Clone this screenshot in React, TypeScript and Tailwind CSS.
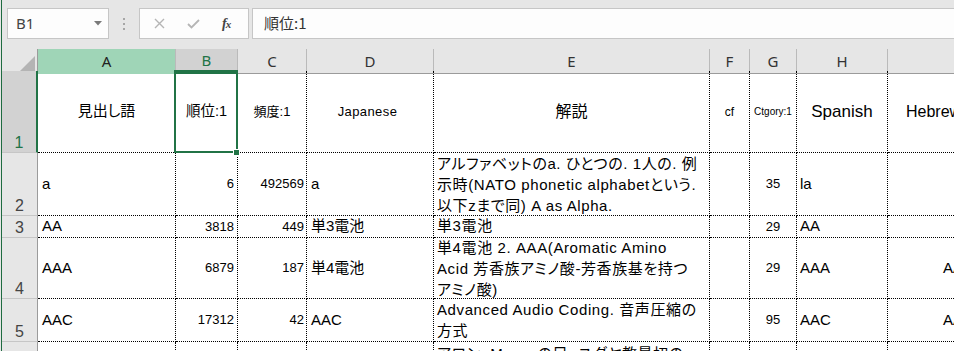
import React from "react";

const F = "font-['Liberation_Sans','Noto_Sans_CJK_JP',sans-serif] [font-feature-settings:'palt']";
const COLS = "grid grid-cols-[36px_138px_62px_69px_127px_276px_40px_47px_91px_220px]";

const cellBase =
  "border-r border-b border-dotted border-black flex items-center overflow-hidden whitespace-nowrap text-black";

type C = { t?: React.ReactNode; c?: string };

function RowHead({ n, active }: { n: number; active?: boolean }) {
  return (
    <div
      className={
        "flex items-end justify-center pb-[1px] text-[16px] leading-none border-b border-b-[#c6c6c6] " +
        (active
          ? "bg-[#d2d2d2] text-[#217346] border-r-2 border-r-[#217346]"
          : "bg-[#e6e6e6] text-[#444] border-r border-r-[#9b9b9b]")
      }
    >
      {n}
    </div>
  );
}

function Row({ n, h, cells, active }: { n: number; h: string; cells: C[]; active?: boolean }) {
  return (
    <div className={COLS + " " + h}>
      <RowHead n={n} active={active} />
      {cells.map((cell, i) => (
        <div key={i} className={cellBase + " " + (cell.c ?? "")}>
          {cell.t}
        </div>
      ))}
    </div>
  );
}

function Lines({ l }: { l: string[] }) {
  return (
    <div className="flex flex-col leading-[21px] text-[15px] tracking-[0.6px]">
      {l.map((s, i) => (
        <span key={i} className="whitespace-pre">
          {s}
        </span>
      ))}
    </div>
  );
}

export default function App() {
  const hdr = "flex items-center justify-center text-[15px] border-r border-r-[#bababa] border-b border-b-[#9b9b9b]";
  return (
    <div className={"w-[954px] h-[351px] overflow-hidden bg-white flex " + F}>
      <div className="w-[2px] shrink-0 flex">
        <div className="w-px bg-[#e6e6e6]" />
        <div className="w-px bg-[#1e6b40]" />
      </div>
      <div className="flex-1 min-w-0 flex flex-col">
        {/* formula bar */}
        <div className="h-[49px] shrink-0 bg-[#e6e6e6] flex items-start pt-[8px] pl-[5px]">
          <div className="w-[102px] h-[31px] bg-[#fdfdfd] border border-[#c6c6c6] flex items-center pl-[8px] pr-[6px]">
            <span className="text-[15px] text-[#444] font-['Noto_Sans',sans-serif]">B1</span>
            <svg className="ml-auto" width="8" height="5" viewBox="0 0 8 5">
              <path d="M0 0 L8 0 L4 4.5 Z" fill="#7a7a7a" />
            </svg>
          </div>
          <div className="w-[30px] h-[31px] flex flex-col items-center justify-center gap-[3px]">
            <div className="w-[2px] h-[2px] bg-[#a6a6a6]" />
            <div className="w-[2px] h-[2px] bg-[#a6a6a6]" />
            <div className="w-[2px] h-[2px] bg-[#a6a6a6]" />
          </div>
          <div className="w-[110px] h-[31px] bg-[#fdfdfd] border border-[#c6c6c6] flex items-center">
            <svg className="ml-[14px]" width="11" height="11" viewBox="0 0 11 11">
              <path d="M1 1 L10 10 M10 1 L1 10" stroke="#b5b5b5" strokeWidth="1.4" fill="none" />
            </svg>
            <svg className="ml-[22px]" width="13" height="10" viewBox="0 0 13 10">
              <path d="M1 5 L4.5 8.5 L12 1" stroke="#b5b5b5" strokeWidth="1.8" fill="none" />
            </svg>
            <span className="ml-[22px] text-[14px] italic font-bold text-[#444] font-['Liberation_Serif',serif] tracking-[-1px]">
              f<span className="text-[11px]">x</span>
            </span>
          </div>
          <div className="flex-1 ml-[3px] h-[31px] bg-[#fdfdfd] border border-r-0 border-[#c6c6c6] flex items-center pl-[11px]">
            <span className="text-[15px] text-[#333] font-['Noto_Sans_CJK_JP',sans-serif]">順位:1</span>
          </div>
        </div>

        {/* column header */}
        <div className={COLS + " h-[22px] shrink-0 font-['Noto_Sans',sans-serif]"}>
          <div className="bg-[#e6e6e6] border-r border-r-[#9b9b9b] border-b border-b-[#9b9b9b] flex items-end justify-end pr-[2px] pb-[2px]">
            <svg width="15" height="15" viewBox="0 0 15 15">
              <path d="M15 0 L15 15 L0 15 Z" fill="#b4b4b4" />
            </svg>
          </div>
          <div className={hdr + " bg-[#9fd5b7] text-[#222] border-b-[#9fd5b7]"}>A</div>
          <div className="flex items-center justify-center text-[15px] bg-[#d2d2d2] text-[#217346] border-r border-r-[#bababa] border-b-2 border-b-[#217346]">B</div>
          <div className={hdr + " bg-[#e6e6e6] text-[#333]"}>C</div>
          <div className={hdr + " bg-[#e6e6e6] text-[#333]"}>D</div>
          <div className={hdr + " bg-[#e6e6e6] text-[#333]"}>E</div>
          <div className={hdr + " bg-[#e6e6e6] text-[#333]"}>F</div>
          <div className={hdr + " bg-[#e6e6e6] text-[#333]"}>G</div>
          <div className={hdr + " bg-[#e6e6e6] text-[#333]"}>H</div>
          <div className={hdr + " bg-[#e6e6e6] text-[#333]"}>I</div>
        </div>

        <Row
          n={1}
          h="h-[82px] shrink-0"
          active
          cells={[
            { t: "見出し語", c: "justify-center text-[15px]" },
            {
              t: (
                <>
                  順位:1
                  <div className="absolute left-[-2px] top-[-1px] w-[64px] h-[83px] border-2 border-[#217346]" />
                  <div className="absolute left-[57px] top-[78px] w-[7px] h-[7px] bg-[#217346] border border-white" />
                </>
              ),
              c: "justify-center text-[14.5px] relative overflow-visible z-10",
            },
            { t: "頻度:1", c: "justify-center text-[13px]" },
            { t: "Japanese", c: "justify-center text-[13px] tracking-[0.4px] pr-[5px]" },
            { t: "解説", c: "justify-center text-[16px]" },
            { t: "cf", c: "justify-center text-[12px]" },
            { t: "Ctgory:1", c: "justify-center text-[10px]" },
            { t: "Spanish", c: "justify-center text-[17px]" },
            { t: "Hebrew", c: "pl-[18px] text-[16px]" },
          ]}
        />
        <Row
          n={2}
          h="h-[63px] shrink-0"
          cells={[
            { t: "a", c: "pl-[4px] text-[15px]" },
            { t: "6", c: "justify-end pr-[3px] text-[13px]" },
            { t: "492569", c: "justify-end pr-[2px] text-[13px]" },
            { t: "a", c: "pl-[4px] text-[15px]" },
            {
              t: <Lines l={["アルファベットのa. ひとつの. 1人の. 例", "示時(NATO phonetic alphabetという.", "以下zまで同) A as Alpha."]} />,
              c: "pl-[3px]",
            },
            { t: "" },
            { t: "35", c: "justify-center text-[13px]" },
            { t: "la", c: "pl-[3px] text-[15px]" },
            { t: "" },
          ]}
        />
        <Row
          n={3}
          h="h-[22px] shrink-0"
          cells={[
            { t: "AA", c: "pl-[4px] text-[15px]" },
            { t: "3818", c: "justify-end pr-[3px] text-[13px]" },
            { t: "449", c: "justify-end pr-[2px] text-[13px]" },
            { t: "単3電池", c: "pl-[4px] text-[15px]" },
            { t: "単3電池", c: "pl-[3px] text-[15px] tracking-[0.6px]" },
            { t: "" },
            { t: "29", c: "justify-center text-[13px]" },
            { t: "AA", c: "pl-[3px] text-[15px]" },
            { t: "" },
          ]}
        />
        <Row
          n={4}
          h="h-[61px] shrink-0"
          cells={[
            { t: "AAA", c: "pl-[4px] text-[15px]" },
            { t: "6879", c: "justify-end pr-[3px] text-[13px]" },
            { t: "187", c: "justify-end pr-[2px] text-[13px]" },
            { t: "単4電池", c: "pl-[4px] text-[15px]" },
            {
              t: <Lines l={["単4電池 2. AAA(Aromatic Amino", "Acid 芳香族アミノ酸-芳香族基を持つ", "アミノ酸)"]} />,
              c: "pl-[3px]",
            },
            { t: "" },
            { t: "29", c: "justify-center text-[13px]" },
            { t: "AAA", c: "pl-[3px] text-[15px]" },
            { t: "AAA", c: "pl-[55px] text-[15px]" },
          ]}
        />
        <Row
          n={5}
          h="h-[43px] shrink-0"
          cells={[
            { t: "AAC", c: "pl-[4px] text-[15px]" },
            { t: "17312", c: "justify-end pr-[3px] text-[13px]" },
            { t: "42", c: "justify-end pr-[2px] text-[13px]" },
            { t: "AAC", c: "pl-[4px] text-[15px]" },
            {
              t: <Lines l={["Advanced Audio Coding. 音声圧縮の", "方式"]} />,
              c: "pl-[3px]",
            },
            { t: "" },
            { t: "95", c: "justify-center text-[13px]" },
            { t: "AAC", c: "pl-[3px] text-[15px]" },
            { t: "AAC", c: "pl-[55px] text-[15px]" },
          ]}
        />
        <Row
          n={6}
          h="h-[60px] shrink-0"
          cells={[
            { t: "" },
            { t: "" },
            { t: "" },
            { t: "" },
            {
              t: <Lines l={["アロン. Mosesの兄. ユダヤ教最初の", "祭司長"]} />,
              c: "pl-[3px] items-start pt-[1px]",
            },
            { t: "" },
            { t: "" },
            { t: "" },
            { t: "" },
          ]}
        />
      </div>
    </div>
  );
}
